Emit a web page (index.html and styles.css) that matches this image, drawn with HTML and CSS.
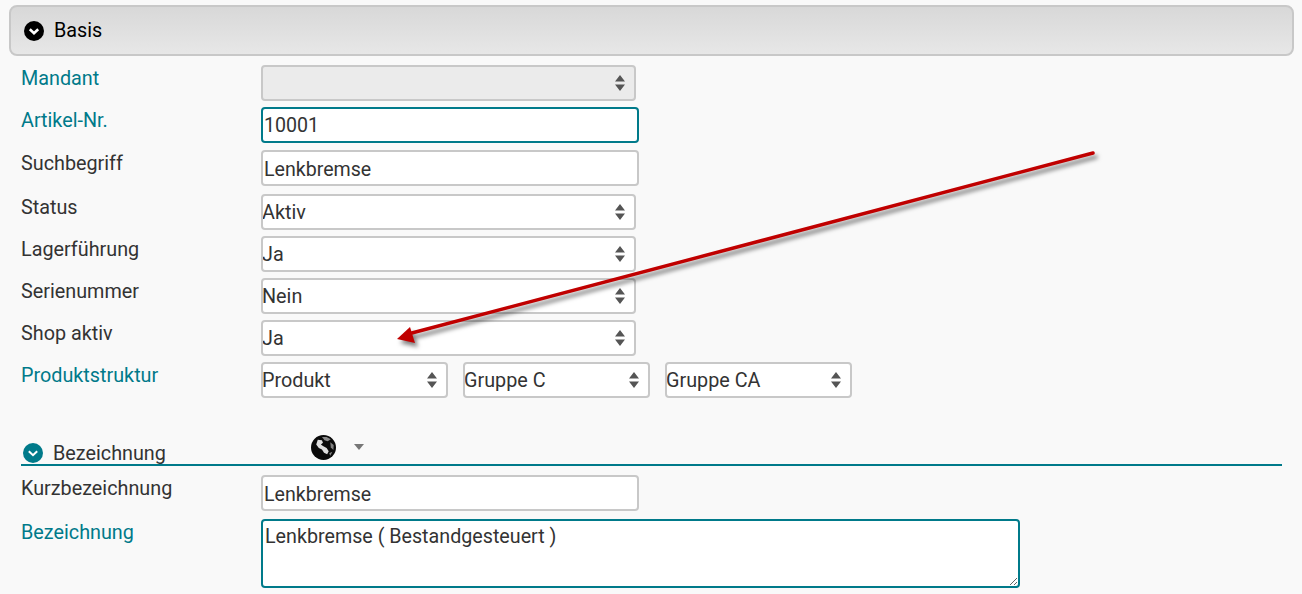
FILE: index.html
```html
<!DOCTYPE html>
<html lang="de">
<head>
<meta charset="utf-8">
<title>Artikel</title>
<link rel="stylesheet" href="styles.css">
</head>
<body>
<main class="page">
  <header class="panel-head">
    <svg class="round-icon" viewBox="0 0 20 20"><circle cx="10" cy="10" r="10" fill="#000"/><path d="M5.800 8.200 10 12.200 14.200 8.200" fill="none" stroke="#fff" stroke-width="2.600"/></svg>
    <span>Basis</span>
  </header>

  <form class="form">
    <div class="row gap-6"><label class="key">Mandant</label>
      <div class="sel wide"><select disabled><option></option></select><svg class="updown" viewBox="0 0 10 16"><path d="M5 0 10 6.500H0ZM5 16 0 9.500H10Z"/></svg></div></div>
    <div class="row gap-7"><label class="key">Artikel-Nr.</label>
      <input class="field focus" value="10001"></div>
    <div class="row gap-8"><label>Suchbegriff</label>
      <input class="field" value="Lenkbremse"></div>
    <div class="row gap-6"><label>Status</label>
      <div class="sel wide"><select><option>Aktiv</option></select><svg class="updown" viewBox="0 0 10 16"><path d="M5 0 10 6.500H0ZM5 16 0 9.500H10Z"/></svg></div></div>
    <div class="row gap-6"><label>Lagerführung</label>
      <div class="sel wide"><select><option>Ja</option></select><svg class="updown" viewBox="0 0 10 16"><path d="M5 0 10 6.500H0ZM5 16 0 9.500H10Z"/></svg></div></div>
    <div class="row gap-6"><label>Serienummer</label>
      <div class="sel wide"><select><option>Nein</option></select><svg class="updown" viewBox="0 0 10 16"><path d="M5 0 10 6.500H0ZM5 16 0 9.500H10Z"/></svg></div></div>
    <div class="row gap-6"><label>Shop aktiv</label>
      <div class="sel wide"><select><option>Ja</option></select><svg class="updown" viewBox="0 0 10 16"><path d="M5 0 10 6.500H0ZM5 16 0 9.500H10Z"/></svg></div></div>
    <div class="row"><label class="key">Produktstruktur</label>
      <div class="triple">
        <div class="sel"><select><option>Produkt</option></select><svg class="updown" viewBox="0 0 10 16"><path d="M5 0 10 6.500H0ZM5 16 0 9.500H10Z"/></svg></div>
        <div class="sel"><select><option>Gruppe C</option></select><svg class="updown" viewBox="0 0 10 16"><path d="M5 0 10 6.500H0ZM5 16 0 9.500H10Z"/></svg></div>
        <div class="sel"><select><option>Gruppe CA</option></select><svg class="updown" viewBox="0 0 10 16"><path d="M5 0 10 6.500H0ZM5 16 0 9.500H10Z"/></svg></div>
      </div></div>

    <div class="section-head">
      <svg class="round-icon" viewBox="0 0 20 20"><circle cx="10" cy="10" r="10" fill="#007a8a"/><path d="M5.800 8.200 10 12.200 14.200 8.200" fill="none" stroke="#fff" stroke-width="2"/></svg>
      <span class="section-title">Bezeichnung</span>
      <svg class="globe" viewBox="0 0 24 24"><circle cx="12" cy="12" r="12" fill="#0a0a0a"/><path d="M6.500 4.500 10.500 5 11.500 7.500 9.500 9 11.500 10.500 15 12.500 17 15.500 15.500 18.500 12.500 17 10.500 14 7.500 12.500 5 9Z" fill="#dedede"/><path d="M10.500 2 15 1.800 19 4 16 6 13 5Z" fill="#8a8a8a"/><path d="M18.500 7 21.800 9.500 21.500 14.500 19 12Z" fill="#808080"/><path d="M17.500 17.500 20.500 16 18.500 20Z" fill="#8a8a8a"/></svg>
      <svg class="caret" viewBox="0 0 10 6"><path d="M0 0H10L5 6Z"/></svg>
    </div>

    <div class="row gap-8"><label>Kurzbezeichnung</label>
      <input class="field" value="Lenkbremse"></div>
    <div class="row"><label class="key">Bezeichnung</label>
      <textarea class="memo">Lenkbremse ( Bestandgesteuert )</textarea></div>
  </form>

  <svg class="annotation" viewBox="0 0 1302 594" width="1302" height="594">
    <g class="arrow">
      <path d="M1093 153 408 334" fill="none" stroke="#c00000" stroke-width="3.500" stroke-linecap="round"/>
      <path d="M397 339 410 327 415 343Z" fill="#c00000"/>
    </g>
  </svg>
</main>
</body>
</html>
```
FILE: styles.css
```css
* {
  box-sizing: border-box;
}

html,
body {
  margin: 0;
  height: 100%;
  background: #f9f9f9;
}

body {
  font-family: Roboto, "Liberation Sans", sans-serif;
  font-size: 19.800px;
  color: #333;
  overflow: hidden;
}

.page {
  position: relative;
  height: 594px;
  padding: 5px 8px 0 9px;
}

.panel-head {
  display: flex;
  align-items: center;
  gap: 10px;
  height: 51px;
  padding: 0 0 0 13px;
  border: 2px solid #c8c8c8;
  border-radius: 8px;
  background: linear-gradient(#d8d8d8, #e7e7e7);
  color: #000;
}

.round-icon {
  flex: none;
  width: 20px;
  height: 20px;
}

.form {
  padding: 9px 0 0 12px;
}

.row {
  display: grid;
  grid-template-columns: 240px 1fr;
  align-items: start;
}

.gap-6 {
  margin-bottom: 6px;
}

.gap-7 {
  margin-bottom: 7px;
}

.gap-8 {
  margin-bottom: 8px;
}

.row label {
  line-height: 28px;
}

.row .key {
  color: #007a8a;
}

.field,
select,
.memo {
  display: block;
  height: 36px;
  margin: 0;
  border: 2px solid #c8c8c8;
  border-radius: 4px;
  background: #fff;
  color: #333;
  font: inherit;
  outline: none;
}

.field {
  width: 378px;
  padding: 3px 1px 0;
  font-size: 19.600px;
}

.field.focus {
  padding-top: 1px;
  border-color: #007a8a;
}

.sel {
  position: relative;
  width: 187px;
}

.sel.wide {
  width: 375px;
}

select {
  width: 100%;
  padding: 1px 0 0;
  text-indent: -1px;
  appearance: none;
}

select:disabled {
  background: #ebebeb;
  opacity: 1;
}

.updown {
  position: absolute;
  top: 10px;
  right: 11px;
  width: 10px;
  height: 16px;
  fill: #555;
  pointer-events: none;
}

.triple {
  display: flex;
  gap: 15px;
}

.section-head {
  position: relative;
  display: flex;
  align-items: flex-end;
  height: 68px;
  margin-right: 12px;
  margin-bottom: 9px;
  border-bottom: 2px solid #007a8a;
}

.section-head .round-icon {
  margin: 0 0 1px 2px;
}

.section-title {
  margin: 0 0 -2px 10px;
  line-height: 24px;
}

.globe {
  position: absolute;
  left: 290px;
  top: 37px;
  width: 25px;
  height: 25px;
  filter: blur(0.4px);
}

.caret {
  position: absolute;
  left: 333px;
  top: 46px;
  width: 10px;
  height: 6px;
  fill: #777;
}

.memo {
  width: 759px;
  height: 69px;
  padding: 4px 2px 0;
  border-color: #007a8a;
  font-size: 19.700px;
  line-height: 24px;
  resize: both;
}

.annotation {
  position: absolute;
  left: 0;
  top: 0;
  pointer-events: none;
}

.arrow {
  filter: drop-shadow(3px 4px 2px rgba(0, 0, 0, 0.5));
}
```
